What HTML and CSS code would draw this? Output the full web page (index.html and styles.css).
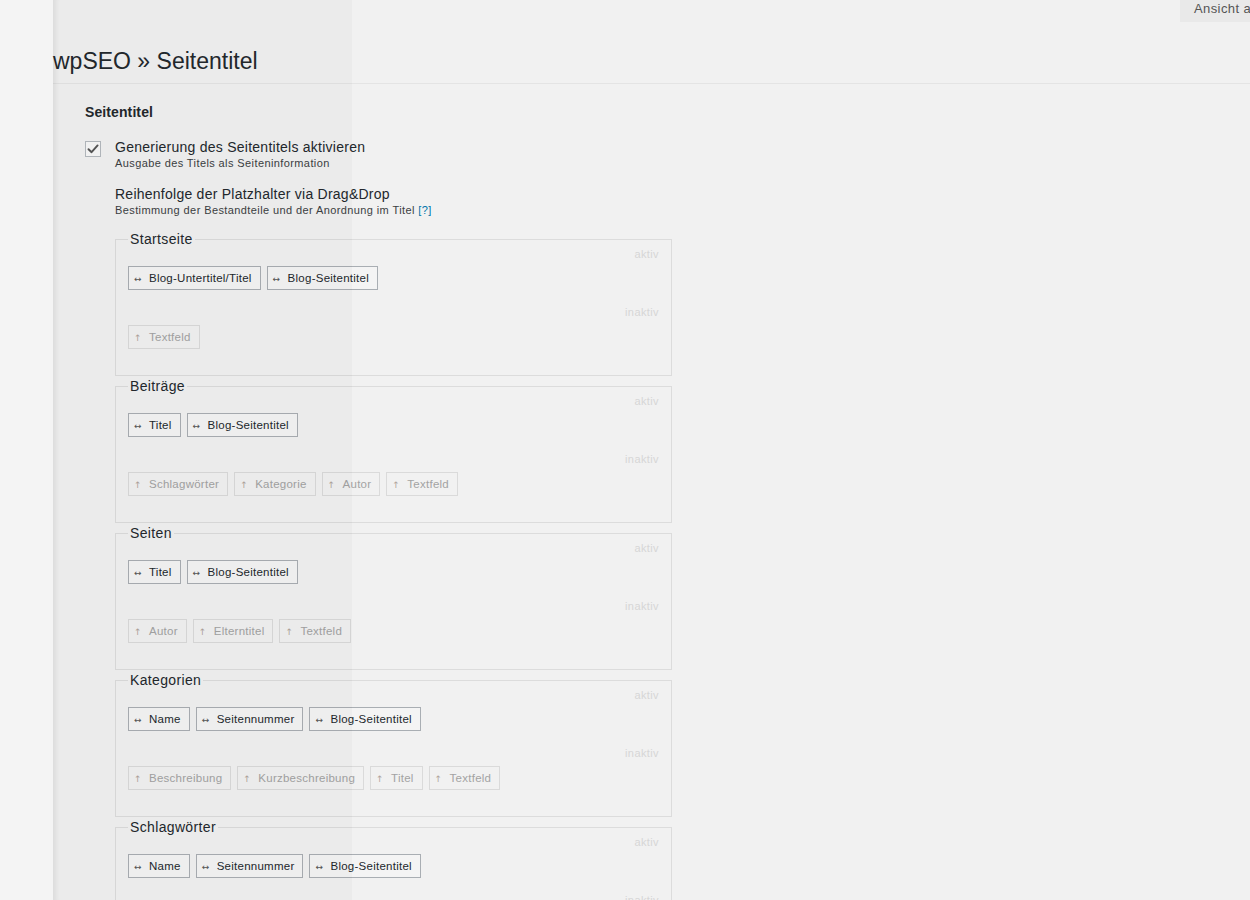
FILE: index.html
```html
<!DOCTYPE html>
<html lang="de">

<head>
    <meta charset="UTF-8">
    <meta name="viewport" content="width=device-width, initial-scale=1.0">
    <title>wpSEO » Seitentitel</title>
    <link rel="stylesheet" href="styles.css">
</head>

<body>
    <div class="screen-tab">Ansicht anpassen</div>
    <div class="drawer-shade"></div>

    <div class="wrap">
        <h1 class="page-title">wpSEO » Seitentitel</h1>

        <div class="section">
            <h2 class="section-title">Seitentitel</h2>

            <div class="option">
                <span class="check">
                    <svg width="14" height="14" viewBox="0 0 14 14"><path d="M2.5 7.2 L5.6 10.2 L11.6 3.4" fill="none" stroke="#555" stroke-width="1.9" stroke-linecap="round" stroke-linejoin="round"/></svg>
                </span>
                <div>
                    <div class="option-label">Generierung des Seitentitels aktivieren</div>
                    <div class="option-desc">Ausgabe des Titels als Seiteninformation</div>
                </div>
            </div>

            <div class="order">
                <div class="option-label">Reihenfolge der Platzhalter via Drag&amp;Drop</div>
                <div class="option-desc">Bestimmung der Bestandteile und der Anordnung im Titel <a href="#" class="help">[?]</a></div>

                <fieldset class="box">
                    <legend>Startseite</legend>
                    <div class="zone active">
                        <div class="zone-label">aktiv</div>
                        <div class="items">
                            <span class="item"><i>↔</i>Blog-Untertitel/Titel</span>
                            <span class="item"><i>↔</i>Blog-Seitentitel</span>
                        </div>
                    </div>
                    <div class="zone inactive">
                        <div class="zone-label">inaktiv</div>
                        <div class="items">
                            <span class="item"><i>↑</i>Textfeld</span>
                        </div>
                    </div>
                </fieldset>

                <fieldset class="box">
                    <legend>Beiträge</legend>
                    <div class="zone active">
                        <div class="zone-label">aktiv</div>
                        <div class="items">
                            <span class="item"><i>↔</i>Titel</span>
                            <span class="item"><i>↔</i>Blog-Seitentitel</span>
                        </div>
                    </div>
                    <div class="zone inactive">
                        <div class="zone-label">inaktiv</div>
                        <div class="items">
                            <span class="item"><i>↑</i>Schlagwörter</span>
                            <span class="item"><i>↑</i>Kategorie</span>
                            <span class="item"><i>↑</i>Autor</span>
                            <span class="item"><i>↑</i>Textfeld</span>
                        </div>
                    </div>
                </fieldset>

                <fieldset class="box">
                    <legend>Seiten</legend>
                    <div class="zone active">
                        <div class="zone-label">aktiv</div>
                        <div class="items">
                            <span class="item"><i>↔</i>Titel</span>
                            <span class="item"><i>↔</i>Blog-Seitentitel</span>
                        </div>
                    </div>
                    <div class="zone inactive">
                        <div class="zone-label">inaktiv</div>
                        <div class="items">
                            <span class="item"><i>↑</i>Autor</span>
                            <span class="item"><i>↑</i>Elterntitel</span>
                            <span class="item"><i>↑</i>Textfeld</span>
                        </div>
                    </div>
                </fieldset>

                <fieldset class="box">
                    <legend>Kategorien</legend>
                    <div class="zone active">
                        <div class="zone-label">aktiv</div>
                        <div class="items">
                            <span class="item"><i>↔</i>Name</span>
                            <span class="item"><i>↔</i>Seitennummer</span>
                            <span class="item"><i>↔</i>Blog-Seitentitel</span>
                        </div>
                    </div>
                    <div class="zone inactive">
                        <div class="zone-label">inaktiv</div>
                        <div class="items">
                            <span class="item"><i>↑</i>Beschreibung</span>
                            <span class="item"><i>↑</i>Kurzbeschreibung</span>
                            <span class="item"><i>↑</i>Titel</span>
                            <span class="item"><i>↑</i>Textfeld</span>
                        </div>
                    </div>
                </fieldset>

                <fieldset class="box">
                    <legend>Schlagwörter</legend>
                    <div class="zone active">
                        <div class="zone-label">aktiv</div>
                        <div class="items">
                            <span class="item"><i>↔</i>Name</span>
                            <span class="item"><i>↔</i>Seitennummer</span>
                            <span class="item"><i>↔</i>Blog-Seitentitel</span>
                        </div>
                    </div>
                    <div class="zone inactive">
                        <div class="zone-label">inaktiv</div>
                        <div class="items">
                            <span class="item"><i>↑</i>Beschreibung</span>
                            <span class="item"><i>↑</i>Titel</span>
                            <span class="item"><i>↑</i>Textfeld</span>
                        </div>
                    </div>
                </fieldset>
            </div>
        </div>
    </div>
</body>

</html>
```

FILE: styles.css
```css
html {
    overflow: hidden;
}

body {
    margin: 0;
    padding: 0;
    background-color: #f1f1f1;
    color: #23282d;
    font-family: "Liberation Sans", Arial, sans-serif;
    font-size: 13px;
    background-image: linear-gradient(to right, #f4f4f4 0, #f4f4f4 53px, transparent 53px);
}

/* Screen options tab, top right */
.screen-tab {
    position: absolute;
    top: 0;
    left: 1180px;
    width: 120px;
    height: 22px;
    line-height: 17px;
    padding-left: 14px;
    background-color: #e9e9e9;
    color: #555;
    font-size: 13px;
    letter-spacing: 0.4px;
    white-space: nowrap;
}

/* darker panel that lies over the left part of the page */
.drawer-shade {
    position: fixed;
    top: 0;
    bottom: 0;
    left: 53px;
    width: 299px;
    background-color: rgba(0, 0, 0, 0.022);
    box-shadow: inset 7px 0 6px -5px rgba(0, 0, 0, 0.09);
    pointer-events: none;
}

.wrap {
    margin-left: 53px;
    padding-top: 47px;
}

.page-title {
    margin: 0;
    font-size: 23px;
    font-weight: 400;
    line-height: 29px;
    padding-bottom: 7px;
    border-bottom: 1px solid #e4e4e4;
}

.section {
    padding-left: 32px;
}

.section-title {
    margin: 19px 0 17px 0;
    font-size: 14px;
    font-weight: 600;
    line-height: 18px;
    letter-spacing: 0.1px;
}

.option {
    display: flex;
    gap: 14px;
}

.check {
    box-sizing: border-box;
    width: 16px;
    height: 16px;
    margin-top: 3px;
    border: 1px solid #b4b9be;
    background-color: #f7f7f7;
    display: flex;
    align-items: center;
    justify-content: center;
}

.option-label {
    font-size: 14px;
    line-height: 18px;
    letter-spacing: 0.25px;
}

.option-desc {
    font-size: 11px;
    line-height: 14px;
    color: #3c3f43;
    letter-spacing: 0.4px;
}

.help {
    color: #0073aa;
    text-decoration: none;
}

.order {
    margin-left: 30px;
    margin-top: 15px;
}

/* Platzhalter boxes */
.box {
    box-sizing: border-box;
    width: 557px;
    margin: 13px 0 1px 0;
    padding: 0 12px 26px 12px;
    border: 1px solid #dcdcdc;
}

.box + .box {
    margin-top: 0;
}

.box legend {
    padding: 0 2px;
    font-size: 14px;
    line-height: 18px;
    letter-spacing: 0.35px;
    color: #23282d;
}

.zone-label {
    text-align: right;
    font-size: 11px;
    line-height: 12px;
    letter-spacing: 0.4px;
    color: #d6d6d6;
}

.items {
    display: flex;
    gap: 6px;
    margin-top: 6px;
}

.zone.active {
    margin-bottom: 16px;
}

.zone.inactive .items {
    margin-top: 7px;
}

.item {
    box-sizing: border-box;
    height: 24px;
    line-height: 22px;
    padding: 0 8px 0 5px;
    border: 1px solid #a9aeb3;
    background-color: #f4f4f4;
    font-size: 11.5px;
    letter-spacing: 0.25px;
    color: #23282d;
    white-space: nowrap;
}

.item i {
    display: inline-block;
    width: 8px;
    margin-right: 7px;
    font-family: "DejaVu Sans", sans-serif;
    font-style: normal;
    font-size: 9px;
    letter-spacing: 0;
    color: #555;
}

.inactive .item {
    border-color: #dadada;
    background-color: transparent;
    color: #a3a3a3;
}

.inactive .item i {
    color: #b0a49c;
}
```
